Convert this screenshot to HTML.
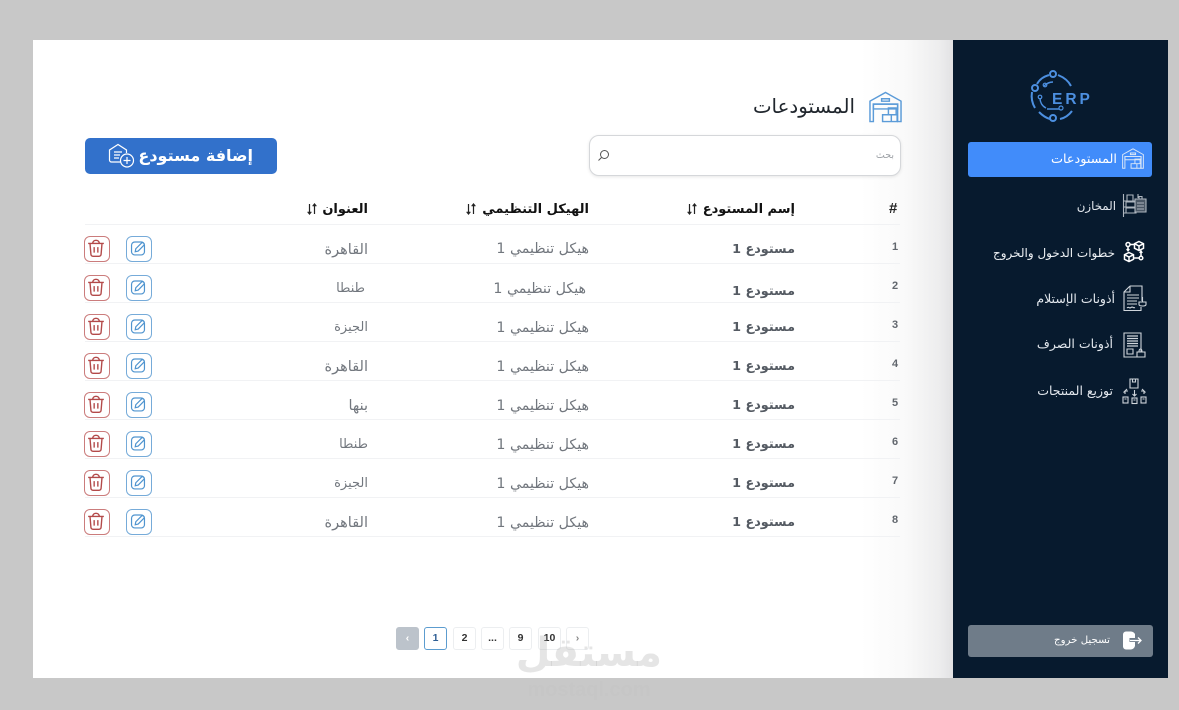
<!DOCTYPE html>
<html lang="ar">
<head>
<meta charset="utf-8">
<title>المستودعات</title>
<style>
*{box-sizing:border-box}
html,body{margin:0;padding:0}
body{width:1179px;height:710px;background:#c8c8c8;position:relative;overflow:hidden;font-family:"DejaVu Sans","Liberation Sans",sans-serif}
.abs,.t,.n,.ib{position:absolute}
.t{white-space:nowrap;direction:rtl;line-height:20px;height:20px}
#main{position:absolute;left:33px;top:40px;width:920px;height:638px;background:linear-gradient(90deg,#fff 0,#fff 90%,#f9f9f9 95%,#ededee 98.500%,#e2e2e4 100%)}
#side{position:absolute;left:953px;top:40px;width:215px;height:638px;background:#071a2e}
.side{color:#e3e8ee;font-size:12.500px;letter-spacing:-.4px}
.hd{color:#111;font-size:13px;font-weight:bold;letter-spacing:-.4px;margin-top:1px}
.c{color:#72777e;font-size:14.200px;letter-spacing:-.5px;margin-top:1px}
.a{color:#72777e;font-size:14px;letter-spacing:-.2px;margin-top:1px}
.b{color:#555b63;font-size:12.800px;font-weight:bold;letter-spacing:-.5px;margin-top:1px}
.n{font:bold 11px "Liberation Sans",sans-serif;color:#62676e;left:892px;width:6px;text-align:center;margin-top:1px}
.ln{position:absolute;left:85px;width:815px;height:1px;background:#f1f2f4}
.ib{width:26px;height:26px;border-radius:6px;background:#fff}
.ib svg{position:absolute;left:0;top:0}
.e{left:126px;border:1px solid #76abd9}
.d{left:84px;border:1px solid #cb7c7c}
.p{position:absolute;top:627px;width:23px;height:23px;border:1px solid #eceef0;border-radius:3px;background:#fff;font:bold 10.500px/21px "Liberation Sans",sans-serif;color:#333;text-align:center}
svg{display:block;overflow:visible}
</style>
</head>
<body>
<svg width="0" height="0" style="position:absolute">
<defs>
<symbol id="wh" viewBox="0 0 34 32"><g fill="none" stroke="currentColor" stroke-width="1.500"><path d="M1 31V10L17 1l16 9v21h-3.500V13h-25v18z"/><path d="M4.500 13h25v5h-25zM13 7.500h8V10h-8z"/><path d="M14 24h9v7h-9zM20 17h8v7h-8zM23 24h6v7h-6z"/></g></symbol>
<symbol id="ed" viewBox="0 0 26 26"><g fill="none" stroke="#4f94cf" stroke-width="1.300"><rect x="6" y="6.500" width="14" height="14" rx="3.500"/><path d="M10 17l.6-3.200L16.800 7.600a1.400 1.400 0 0 1 2 0l.5.500a1.400 1.400 0 0 1 0 2L13.200 16.300z" fill="#fff"/></g></symbol>
<symbol id="tr" viewBox="0 0 26 26"><g fill="none" stroke="#b34a4a" stroke-width="1.500"><path d="M4.500 8h17M9.500 8c0-4.500 7-4.500 7 0"/><path d="M6.500 8l1 12a2.200 2.200 0 0 0 2.200 2h6.600a2.200 2.200 0 0 0 2.200-2l1-12"/><path d="M11 12v6M15 12v6"/></g></symbol>
</defs>
</svg>

<div id="main"></div>
<div id="side"></div>

<!-- Title -->
<svg class="abs" style="left:869px;top:91px;color:#5b9bd8" width="33" height="32"><use href="#wh"/></svg>
<div class="t" style="right:324px;top:95px;font-size:19.800px;color:#20262d;letter-spacing:-.5px;line-height:24px;height:24px">المستودعات</div>

<!-- Search -->
<div class="abs" style="left:589px;top:135px;width:312px;height:41px;border:1px solid #d5d7da;border-radius:10px;background:#fff;box-shadow:0 1px 3px rgba(0,0,0,.1)"></div>
<div class="t" style="right:285px;top:146px;font-size:9.500px;color:#9da1a6;letter-spacing:-.3px">بحث</div>
<svg class="abs" style="left:597px;top:149px" width="13" height="13" viewBox="0 0 13 13"><g fill="none" stroke="#555" stroke-width="1"><circle cx="7.500" cy="5.500" r="4"/><path d="M4.600 8.400L1.500 11.500"/></g></svg>

<!-- Add button -->
<div class="abs" style="left:85px;top:138px;width:192px;height:36px;border-radius:5px;background:#3271cb"></div>
<div class="t" style="right:926px;top:146px;font-size:16px;font-weight:bold;color:#fff;letter-spacing:-.6px">إضافة مستودع</div>
<svg class="abs" style="left:108px;top:143px" width="27" height="26" viewBox="0 0 27 26"><g fill="none" stroke="#fff" stroke-width="1.200"><path d="M1.500 17V7L10 1.500 18.500 7v3M1.500 17a2 2 0 0 0 2 2H13"/><path d="M6 9h8M6 12h6M6 15h5"/><circle cx="19" cy="17.500" r="6.500" fill="#3271cb"/><path d="M19 14v7M15.500 17.500h7"/></g></svg>

<!-- Table head -->
<div class="ln" style="top:224px"></div>
<div class="t" style="left:889px;top:199px;font:bold 15px/20px 'Liberation Sans',sans-serif;color:#222;direction:ltr">#</div>
<div class="t hd" style="right:384px;top:199px">إسم المستودع</div>
<div class="t hd" style="right:590px;top:199px">الهيكل التنظيمي</div>
<div class="t hd" style="right:811px;top:199px">العنوان</div>
<svg class="abs" style="left:687px;top:203px;color:#222" width="10" height="12" viewBox="0 0 10 12"><path d="M2.500 1v10M.7 8.800l1.800 2.200 1.800-2.200M7.500 11V1M5.700 3.200L7.500 1l1.800 2.200" fill="none" stroke="currentColor" stroke-width="1.200"/></svg>
<svg class="abs" style="left:466px;top:203px;color:#222" width="10" height="12" viewBox="0 0 10 12"><path d="M2.500 1v10M.7 8.800l1.800 2.200 1.800-2.200M7.500 11V1M5.700 3.200L7.500 1l1.800 2.200" fill="none" stroke="currentColor" stroke-width="1.200"/></svg>
<svg class="abs" style="left:307px;top:203px;color:#222" width="10" height="12" viewBox="0 0 10 12"><path d="M2.500 1v10M.7 8.800l1.800 2.200 1.800-2.200M7.500 11V1M5.700 3.200L7.500 1l1.800 2.200" fill="none" stroke="currentColor" stroke-width="1.200"/></svg>

<!-- Row 1 -->
<div class="n" style="top:240px">1</div><div class="t b" style="right:384px;top:239px">مستودع 1</div><div class="t c" style="right:590px;top:238px">هيكل تنظيمي 1</div><div class="t a" style="right:811px;top:239px;font-size:14.500px;letter-spacing:.5px">القاهرة</div>
<div class="ib e" style="top:236px"><svg width="24" height="24" viewBox="1 1 24 24"><use href="#ed"/></svg></div><div class="ib d" style="top:236px"><svg width="24" height="24" viewBox="1 1 24 24"><use href="#tr"/></svg></div><div class="ln" style="top:263px"></div>
<!-- Row 2 -->
<div class="n" style="top:279px">2</div><div class="t b" style="right:384px;top:281px">مستودع 1</div><div class="t c" style="right:593px;top:278px">هيكل تنظيمي 1</div><div class="t a" style="right:814px;top:278px;font-size:13px">طنطا</div>
<div class="ib e" style="top:275px"><svg width="24" height="24" viewBox="1 1 24 24"><use href="#ed"/></svg></div><div class="ib d" style="top:275px"><svg width="24" height="24" viewBox="1 1 24 24"><use href="#tr"/></svg></div><div class="ln" style="top:302px"></div>
<!-- Row 3 -->
<div class="n" style="top:318px">3</div><div class="t b" style="right:384px;top:317px">مستودع 1</div><div class="t c" style="right:590px;top:317px">هيكل تنظيمي 1</div><div class="t a" style="right:811px;top:317px;font-size:13px">الجيزة</div>
<div class="ib e" style="top:314px"><svg width="24" height="24" viewBox="1 1 24 24"><use href="#ed"/></svg></div><div class="ib d" style="top:314px"><svg width="24" height="24" viewBox="1 1 24 24"><use href="#tr"/></svg></div><div class="ln" style="top:341px"></div>
<!-- Row 4 -->
<div class="n" style="top:357px">4</div><div class="t b" style="right:384px;top:356px">مستودع 1</div><div class="t c" style="right:590px;top:356px">هيكل تنظيمي 1</div><div class="t a" style="right:811px;top:356px;font-size:14.500px;letter-spacing:.5px">القاهرة</div>
<div class="ib e" style="top:353px"><svg width="24" height="24" viewBox="1 1 24 24"><use href="#ed"/></svg></div><div class="ib d" style="top:353px"><svg width="24" height="24" viewBox="1 1 24 24"><use href="#tr"/></svg></div><div class="ln" style="top:380px"></div>
<!-- Row 5 -->
<div class="n" style="top:396px">5</div><div class="t b" style="right:384px;top:395px">مستودع 1</div><div class="t c" style="right:590px;top:395px">هيكل تنظيمي 1</div><div class="t a" style="right:811px;top:395px;font-size:14.500px">بنها</div>
<div class="ib e" style="top:392px"><svg width="24" height="24" viewBox="1 1 24 24"><use href="#ed"/></svg></div><div class="ib d" style="top:392px"><svg width="24" height="24" viewBox="1 1 24 24"><use href="#tr"/></svg></div><div class="ln" style="top:419px"></div>
<!-- Row 6 -->
<div class="n" style="top:435px">6</div><div class="t b" style="right:384px;top:434px">مستودع 1</div><div class="t c" style="right:590px;top:434px">هيكل تنظيمي 1</div><div class="t a" style="right:811px;top:434px;font-size:13px">طنطا</div>
<div class="ib e" style="top:431px"><svg width="24" height="24" viewBox="1 1 24 24"><use href="#ed"/></svg></div><div class="ib d" style="top:431px"><svg width="24" height="24" viewBox="1 1 24 24"><use href="#tr"/></svg></div><div class="ln" style="top:458px"></div>
<!-- Row 7 -->
<div class="n" style="top:474px">7</div><div class="t b" style="right:384px;top:473px">مستودع 1</div><div class="t c" style="right:590px;top:473px">هيكل تنظيمي 1</div><div class="t a" style="right:811px;top:473px;font-size:13px">الجيزة</div>
<div class="ib e" style="top:470px"><svg width="24" height="24" viewBox="1 1 24 24"><use href="#ed"/></svg></div><div class="ib d" style="top:470px"><svg width="24" height="24" viewBox="1 1 24 24"><use href="#tr"/></svg></div><div class="ln" style="top:497px"></div>
<!-- Row 8 -->
<div class="n" style="top:513px">8</div><div class="t b" style="right:384px;top:512px">مستودع 1</div><div class="t c" style="right:590px;top:512px">هيكل تنظيمي 1</div><div class="t a" style="right:811px;top:512px;font-size:14.500px;letter-spacing:.5px">القاهرة</div>
<div class="ib e" style="top:509px"><svg width="24" height="24" viewBox="1 1 24 24"><use href="#ed"/></svg></div><div class="ib d" style="top:509px"><svg width="24" height="24" viewBox="1 1 24 24"><use href="#tr"/></svg></div><div class="ln" style="top:536px"></div>

<!-- Pagination -->
<div class="p" style="left:396px;background:#bcc3cb;border-color:#bcc3cb;color:#fff">‹</div>
<div class="p" style="left:424px;border-color:#5c9ccf;color:#2f5f94">1</div>
<div class="p" style="left:453px">2</div>
<div class="p" style="left:481px">...</div>
<div class="p" style="left:509px">9</div>
<div class="p" style="left:538px">10</div>
<div class="p" style="left:566px;color:#888;background:transparent">›</div>

<!-- Watermark -->
<div class="t" style="left:516px;top:628px;width:146px;height:50px;line-height:50px;font-size:40px;font-weight:bold;color:rgba(170,170,170,.3);letter-spacing:-1px;text-align:center;direction:rtl">مستقل</div>
<div class="t" style="left:518px;top:678px;width:142px;direction:ltr;font:bold 20px/24px 'Liberation Sans',sans-serif;color:rgba(170,170,170,.05);text-align:center">mostaql.com</div>

<!-- Logo -->
<svg class="abs" style="left:1029px;top:70px;color:#4c8fe0" width="64" height="54" viewBox="0 0 64 54"><g fill="none" stroke="currentColor" stroke-width="2"><path d="M8 14C11 9 14 7 20 5M29 5c5 2 10 5 13 11M3 22c-1 6 0 11 3 16M10 42c3 3 7 6 11 7M31 49c5-1 9-4 12-8"/><circle cx="6" cy="18" r="3"/><circle cx="24" cy="4" r="3"/><circle cx="24" cy="48" r="3"/><path d="M15 16c3-3 6-4 9-4" stroke-width="1.500"/><circle cx="16" cy="15" r="1.800" stroke-width="1.200"/><path d="M11 28c0 4 2 8 6 10" stroke-width="1.500"/><circle cx="11" cy="27" r="1.800" stroke-width="1.200"/><path d="M18 39h12" stroke-width="1.500"/><circle cx="32" cy="38" r="2" stroke-width="1.200"/></g><text x="23" y="34" font-family="Liberation Sans,sans-serif" font-size="15.500" font-weight="bold" fill="currentColor" letter-spacing="3">ERP</text></svg>

<!-- Nav -->
<div class="abs" style="left:968px;top:142px;width:184px;height:35px;border-radius:3px;background:#418cfa"></div>
<svg class="abs" style="left:1122px;top:148px;color:#dbe7f7" width="22" height="21"><use href="#wh"/></svg>
<div class="t side" style="right:62px;top:150px;color:#fff;font-size:12.800px">المستودعات</div>

<svg class="abs" style="left:1122px;top:193px" width="25" height="25" viewBox="0 0 25 25"><g fill="none" stroke="#aeb6bf" stroke-width="1.100"><path d="M1.500 1v23M16 1v4M1.500 8H14M1.500 14H14M1.500 20H14M5 2h6v6H5zM4 9h10v5H4zM4 15h10v5H4z"/><path d="M13 6h11v13H13z" fill="#4a5765"/><path d="M17 3.500h3V6h-3zM15 10h7M15 13h7M15 16h7"/></g></svg>
<div class="t side" style="right:63px;top:196px;font-size:11.800px">المخازن</div>

<svg class="abs" style="left:1123px;top:240px" width="23" height="23" viewBox="0 0 23 23"><g fill="none" stroke="#fff" stroke-width="1.500"><path d="M16 1.500l4.500 2.200v4.600L16 10.500l-4.500-2.200V3.700zM11.500 3.700L16 6l4.500-2.300M16 6v4.500"/><path d="M6 12.500l4.500 2.200v4.600L6 21.500l-4.500-2.200v-4.600zM1.500 14.700L6 17l4.500-2.300M6 17v4.500"/><circle cx="5" cy="4.500" r="2"/><path d="M7 4.500h4M5 6.500v4M3.700 9l1.300 1.700L6.300 9"/><circle cx="18" cy="18" r="1.800"/><path d="M11 18h5M18 11v5M16.800 13l1.200-2 1.200 2"/></g></svg>
<div class="t side" style="right:64px;top:243px;font-size:12px;color:#eef1f4">خطوات الدخول والخروج</div>

<svg class="abs" style="left:1123px;top:285px" width="24" height="27" viewBox="0 0 24 27"><g fill="none" stroke="#cfd5db" stroke-width="1.100"><path d="M7 1h12v15M7 1L1 7v18.500h17V22M1 7h6V1"/><path d="M4 10h12M4 13h12M4 16h10M4 19h10M4 23c2-2 2 1 4-.5s2 1 4 0"/><path d="M16 17h7v2.500c0 2-7 2-7 0zM19.500 12v5"/></g></svg>
<div class="t side" style="right:64px;top:289px">أذونات الإستلام</div>

<svg class="abs" style="left:1123px;top:332px" width="23" height="26" viewBox="0 0 23 26"><g fill="none" stroke="#cfd5db" stroke-width="1.100"><path d="M1 1h17v24H1z"/><path d="M4 4h11M4 6.500h11M4 9h11M4 11.500h11M4 14h11" stroke-width="1.300"/><path d="M4 17h6v5H4z"/><path d="M14 20h8v5h-8z" fill="#071a2e"/><path d="M16 20c0-4 3-4 3 0"/></g></svg>
<div class="t side" style="right:66px;top:334px">أذونات الصرف</div>

<svg class="abs" style="left:1122px;top:378px" width="25" height="26" viewBox="0 0 25 26"><g fill="none" stroke="#cfd5db" stroke-width="1.100"><path d="M8 1h8v9H8zM10.500 1v3h3V1"/><path d="M3 16v-3h3M1.500 14.500L5 11M12.500 12v6M10.500 16l2 2 2-2M22 16v-3h-3M23.500 14.500L20 11"/><rect x="1" y="19" width="5" height="6"/><rect x="10" y="20" width="5" height="5.500"/><rect x="19" y="19" width="5" height="6"/><path d="M2.500 21h2M11.500 22h2M20.500 21h2"/></g></svg>
<div class="t side" style="right:66px;top:381px">توزيع المنتجات</div>

<!-- Logout -->
<div class="abs" style="left:968px;top:625px;width:185px;height:32px;border-radius:3px;background:#6f7c89"></div>
<div class="t side" style="right:69px;top:631px;font-size:10.200px;color:#fff">تسجيل خروج</div>
<svg class="abs" style="left:1122px;top:631px" width="21" height="19" viewBox="0 0 21 19"><path d="M1 3.500a3 3 0 0 1 3-3h5a5 5 0 0 1 4 2.500v4H7.500v4H13v4a5 5 0 0 1-4 3.500H4a3 3 0 0 1-3-3z" fill="#fff"/><path d="M8 9.500h11M16 6.500l3 3-3 3" fill="none" stroke="#fff" stroke-width="1.300"/></svg>
</body>
</html>
